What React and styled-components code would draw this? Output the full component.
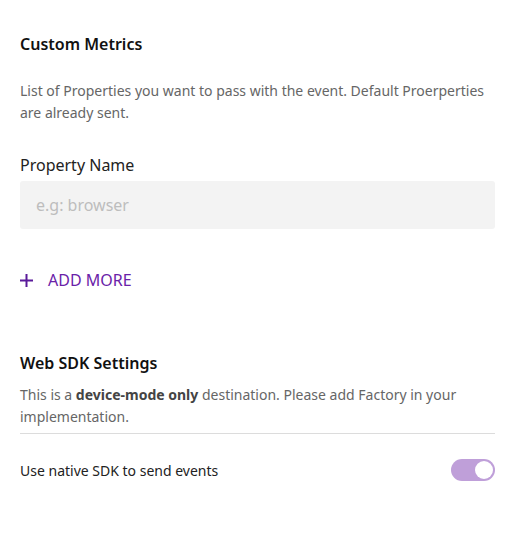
import React from 'react';
import styled, { createGlobalStyle } from 'styled-components';

const GlobalStyle = createGlobalStyle`
  body {
    margin: 0;
    background: #ffffff;
    font-family: "Noto Sans", "Open Sans", sans-serif;
  }
`;

const Page = styled.div`
  padding: 32px 22px 40px 20px;
  display: flex;
  flex-direction: column;
`;

const Title = styled.h2`
  margin: 0;
  font-size: 16px;
  line-height: 24px;
  font-weight: 600;
  color: #111;
`;

const Description = styled.p`
  margin: ${(p) => p.$top || 0}px 0 0;
  font-size: 14px;
  line-height: 22px;
  color: #666;

  b {
    font-weight: 700;
    color: #444;
  }
`;

const Label = styled.label`
  display: block;
  margin-top: 29px;
  font-size: 16px;
  line-height: 24px;
  color: #222;
`;

const Input = styled.input`
  margin-top: 4px;
  height: 48px;
  box-sizing: border-box;
  border: none;
  border-radius: 3px;
  background: #f3f3f3;
  padding: 0 16px;
  font-family: inherit;
  font-size: 16px;
  color: #333;
  outline: none;

  &::placeholder {
    color: #bdbdbd;
  }
`;

const AddMore = styled.button`
  margin-top: 39px;
  align-self: flex-start;
  display: flex;
  align-items: center;
  gap: 15px;
  background: none;
  border: none;
  padding: 0;
  font-family: inherit;
  font-size: 16px;
  line-height: 24px;
  color: #6a22a8;
  cursor: pointer;
`;

const Section = styled.div`
  margin-top: 59px;
`;

const Divider = styled.hr`
  margin: 5px 0 0;
  border: none;
  border-top: 1px solid #dcdcdc;
`;

const Row = styled.div`
  margin-top: 25px;
  display: flex;
  align-items: center;
  justify-content: space-between;
  font-size: 14px;
  color: #222;
`;

const Toggle = styled.span`
  position: relative;
  width: 44px;
  height: 22px;
  border-radius: 11px;
  background: ${(p) => (p.$on ? '#bf9fd9' : '#ccc')};

  &::after {
    content: '';
    position: absolute;
    top: 2px;
    left: ${(p) => (p.$on ? '24px' : '2px')};
    width: 18px;
    height: 18px;
    border-radius: 50%;
    background: #fff;
  }
`;

const PlusIcon = () => (
  <svg width="13" height="13" viewBox="0 0 13 13">
    <path d="M6.5 0v13M0 6.5h13" stroke="#5a1a9a" strokeWidth="2" />
  </svg>
);

const App = () => (
  <>
    <GlobalStyle />
    <Page>
      <Title>Custom Metrics</Title>
      <Description $top={24}>
        List of Properties you want to pass with the event. Default Proerperties are already sent.
      </Description>
      <Label>Property Name</Label>
      <Input placeholder="e.g: browser" />
      <AddMore>
        <PlusIcon />
        ADD MORE
      </AddMore>
      <Section>
        <Title>Web SDK Settings</Title>
        <Description $top={9}>
          This is a <b>device-mode only</b> destination. Please add Factory in your implementation.
        </Description>
        <Divider />
        <Row>
          <span>Use native SDK to send events</span>
          <Toggle $on />
        </Row>
      </Section>
    </Page>
  </>
);

export default App;
